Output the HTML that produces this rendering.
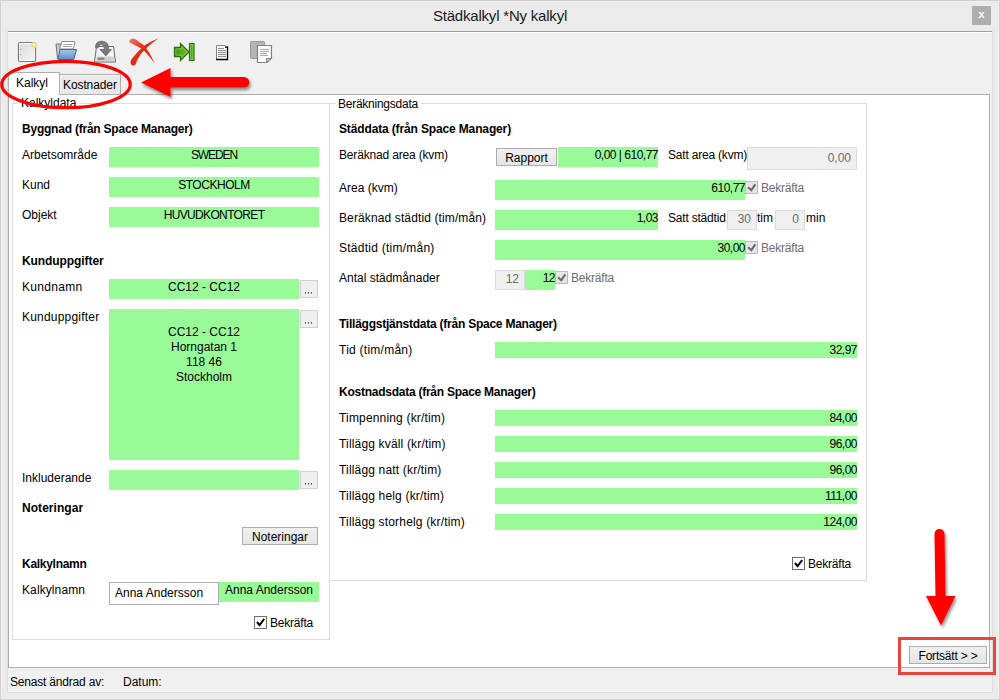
<!DOCTYPE html>
<html><head><meta charset="utf-8">
<style>
*{box-sizing:border-box}
html,body{margin:0;padding:0;width:1000px;height:700px;overflow:hidden;background:#ebebeb;font-family:"Liberation Sans",sans-serif;font-size:12px;color:#000}
.a{position:absolute}
.t{position:absolute;white-space:nowrap;line-height:15px;font-size:12px}
.b{font-weight:bold;letter-spacing:-0.2px}
.n{letter-spacing:-0.5px}
.g{position:absolute;background:#98fb98}
.gr{color:#6d6d6d}
.btn{position:absolute;border:1px solid #acacac;background:linear-gradient(#f0f0f0,#e5e5e5);text-align:center;line-height:15px}
.dis{position:absolute;border:1px solid #d9d9d9;background:#f0f0f0;color:#6d6d6d;text-align:right;line-height:15px}
.cb{position:absolute;width:13px;height:13px;border:1px solid #707070;background:#fff}
.cbd{position:absolute;width:13px;height:13px;border:1px solid #bcbcbc;background:#e6e6e6}
.dots{position:absolute;width:18px;height:18px;border:1px solid #d0d0d0;background:#efefef}
</style></head><body>
<!-- window frame -->
<div class="a" style="left:0;top:0;width:1000px;height:700px;border:1px solid #d0d0d0"></div>
<div class="a" style="left:1px;top:1px;width:998px;height:698px;border:1px solid #efefef"></div>
<!-- title -->
<div class="t" style="left:0;width:1000px;text-align:center;top:7px;font-size:15px;line-height:18px;letter-spacing:-0.2px;color:#1a1a1a">Städkalkyl *Ny kalkyl</div>
<div class="a" style="left:972px;top:6px;width:19px;height:19px;background:#adadad"></div>
<div class="t b" style="left:972px;top:7px;width:19px;text-align:center;color:#fff;font-size:11px">x</div>
<!-- client panel -->
<div class="a" style="left:7px;top:31px;width:986px;height:662px;background:#f0f0f0;border-left:1px solid #dcdcdc;border-right:1px solid #dcdcdc"></div>
<div class="a" style="left:8px;top:31px;width:984px;height:1px;background:#a0a0a0"></div>
<div class="a" style="left:8px;top:32px;width:984px;height:1px;background:#fff"></div>

<!-- tab page -->
<div class="a" style="left:8px;top:94px;width:982px;height:574px;background:#fff;border:1px solid #adadad"></div>
<!-- tabs -->
<div class="a" style="left:59px;top:74px;width:62px;height:21px;background:#e9e9e9;border:1px solid #adadad;box-shadow:inset 1px 1px 0 #f5f5f5"></div>
<div class="t" style="left:63px;top:78px;letter-spacing:-0.1px">Kostnader</div>
<div class="a" style="left:8px;top:72px;width:52px;height:23px;background:#fff;border:1px solid #adadad;border-bottom:none"></div>
<div class="t" style="left:16px;top:76px">Kalkyl</div>

<div class="a" style="left:12px;top:103px;width:318px;height:537px;border:1px solid #dcdcdc"></div>
<div class="a" style="left:329px;top:103px;width:538px;height:478px;border:1px solid #dcdcdc"></div>
<div class="t" style="left:18px;top:96px;background:#fff;padding:0 3px">Kalkyldata</div>
<div class="t" style="left:335px;top:97px;background:#fff;padding:0 3px;letter-spacing:-0.25px">Beräkningsdata</div>
<div class="t b" style="left:22px;top:122px;letter-spacing:-0.22px">Byggnad (från Space Manager)</div>
<div class="t " style="left:22px;top:148px;">Arbetsområde</div>
<div class="g" style="left:109px;top:147px;width:210px;height:20px"></div>
<div class="t" style="left:109px;width:210px;text-align:center;top:148px;letter-spacing:-1.1px">SWEDEN</div>
<div class="t " style="left:22px;top:178px;">Kund</div>
<div class="g" style="left:109px;top:177px;width:210px;height:20px"></div>
<div class="t" style="left:109px;width:210px;text-align:center;top:178px;letter-spacing:-0.45px">STOCKHOLM</div>
<div class="t " style="left:22px;top:208px;">Objekt</div>
<div class="g" style="left:109px;top:207px;width:210px;height:20px"></div>
<div class="t" style="left:109px;width:210px;text-align:center;top:208px;letter-spacing:-0.65px">HUVUDKONTORET</div>
<div class="t b" style="left:22px;top:254px;letter-spacing:-0.08px">Kunduppgifter</div>
<div class="t " style="left:22px;top:280px;letter-spacing:0.3px">Kundnamn</div>
<div class="g" style="left:109px;top:279px;width:190px;height:20px"></div>
<div class="t" style="left:109px;width:190px;text-align:center;top:280px;">CC12 - CC12</div>
<div class="dots" style="left:300px;top:280px"></div>
<div class="t " style="left:22px;top:310px;letter-spacing:0.2px">Kunduppgifter</div>
<div class="g" style="left:109px;top:309px;width:190px;height:151px"></div>
<div class="t" style="left:109px;width:190px;text-align:center;top:325px">CC12 - CC12<br>Horngatan 1<br>118 46<br>Stockholm</div>
<div class="dots" style="left:300px;top:310px"></div>
<div class="t " style="left:22px;top:471px;">Inkluderande</div>
<div class="g" style="left:109px;top:470px;width:190px;height:20px"></div>
<div class="dots" style="left:300px;top:471px"></div>
<div class="t b" style="left:22px;top:501px;letter-spacing:0.05px">Noteringar</div>
<div class="btn" style="left:242px;top:527px;width:76px;height:18px;padding-top:2px">Noteringar</div>
<div class="t b" style="left:22px;top:557px;letter-spacing:-0.28px">Kalkylnamn</div>
<div class="t " style="left:22px;top:583px;letter-spacing:0.1px">Kalkylnamn</div>
<div class="a" style="left:109px;top:582px;width:110px;height:23px;border:1px solid #abadb3;background:#fff"></div>
<div class="t " style="left:115px;top:586px;">Anna Andersson</div>
<div class="g" style="left:219px;top:582px;width:100px;height:20px"></div>
<div class="t" style="left:219px;width:100px;text-align:center;top:583px;">Anna Andersson</div>
<div class="cb" style="left:254px;top:616px"></div>
<div class="t " style="left:270px;top:616px;letter-spacing:-0.2px">Bekräfta</div>
<div class="t b" style="left:339px;top:122px;letter-spacing:-0.14px">Städdata (från Space Manager)</div>
<div class="t " style="left:339px;top:148px;letter-spacing:-0.17px">Beräknad area (kvm)</div>
<div class="btn" style="left:496px;top:148px;width:61px;height:18px;padding-top:2px">Rapport</div>
<div class="g" style="left:558px;top:147px;width:100px;height:20px"></div>
<div class="t" style="left:458px;width:200px;text-align:right;letter-spacing:-0.5px;top:148px;">0,00 | 610,77</div>
<div class="t " style="left:668px;top:148px;letter-spacing:-0.2px">Satt area (kvm)</div>
<div class="dis" style="left:747px;top:147px;width:110px;height:23px;padding:3px 5px 0 0">0,00</div>
<div class="t " style="left:339px;top:181px;">Area (kvm)</div>
<div class="g" style="left:495px;top:180px;width:250px;height:20px"></div>
<div class="t" style="left:395px;width:350px;text-align:right;letter-spacing:-0.5px;top:181px;">610,77</div>
<div class="cbd" style="left:745px;top:181px"></div>
<div class="t gr" style="left:761px;top:181px;letter-spacing:-0.2px">Bekräfta</div>
<div class="t " style="left:339px;top:211px;letter-spacing:0.12px">Beräknad städtid (tim/mån)</div>
<div class="g" style="left:495px;top:210px;width:163px;height:20px"></div>
<div class="t" style="left:395px;width:263px;text-align:right;letter-spacing:-0.5px;top:211px;">1,03</div>
<div class="t " style="left:668px;top:211px;letter-spacing:-0.2px">Satt städtid</div>
<div class="dis" style="left:727px;top:210px;width:30px;height:20px;padding:1px 5px 0 0">30</div>
<div class="t " style="left:757px;top:211px;">tim</div>
<div class="dis" style="left:775px;top:210px;width:30px;height:20px;padding:1px 5px 0 0">0</div>
<div class="t " style="left:806px;top:211px;">min</div>
<div class="t " style="left:339px;top:241px;letter-spacing:0.25px">Städtid (tim/mån)</div>
<div class="g" style="left:495px;top:240px;width:250px;height:20px"></div>
<div class="t" style="left:395px;width:350px;text-align:right;letter-spacing:-0.5px;top:241px;">30,00</div>
<div class="cbd" style="left:745px;top:241px"></div>
<div class="t gr" style="left:761px;top:241px;letter-spacing:-0.2px">Bekräfta</div>
<div class="t " style="left:339px;top:271px;">Antal städmånader</div>
<div class="dis" style="left:495px;top:270px;width:30px;height:20px;padding:1px 5px 0 0">12</div>
<div class="g" style="left:525px;top:270px;width:30px;height:20px"></div>
<div class="t" style="left:425px;width:130px;text-align:right;letter-spacing:-0.5px;top:271px;">12</div>
<div class="cbd" style="left:555px;top:271px"></div>
<div class="t gr" style="left:571px;top:271px;letter-spacing:-0.2px">Bekräfta</div>
<div class="t b" style="left:339px;top:317px;letter-spacing:-0.24px">Tilläggstjänstdata (från Space Manager)</div>
<div class="t " style="left:339px;top:343px;letter-spacing:0.25px">Tid (tim/mån)</div>
<div class="g" style="left:495px;top:342px;width:362px;height:16px"></div>
<div class="t" style="left:395px;width:462px;text-align:right;letter-spacing:-0.5px;top:343px;">32,97</div>
<div class="t b" style="left:339px;top:385px;letter-spacing:-0.25px">Kostnadsdata (från Space Manager)</div>
<div class="t " style="left:339px;top:411px;letter-spacing:0.17px">Timpenning (kr/tim)</div>
<div class="g" style="left:495px;top:410px;width:362px;height:16px"></div>
<div class="t" style="left:395px;width:462px;text-align:right;letter-spacing:-0.5px;top:411px;">84,00</div>
<div class="t " style="left:339px;top:437px;letter-spacing:0.17px">Tillägg kväll (kr/tim)</div>
<div class="g" style="left:495px;top:436px;width:362px;height:16px"></div>
<div class="t" style="left:395px;width:462px;text-align:right;letter-spacing:-0.5px;top:437px;">96,00</div>
<div class="t " style="left:339px;top:463px;letter-spacing:0.17px">Tillägg natt (kr/tim)</div>
<div class="g" style="left:495px;top:462px;width:362px;height:16px"></div>
<div class="t" style="left:395px;width:462px;text-align:right;letter-spacing:-0.5px;top:463px;">96,00</div>
<div class="t " style="left:339px;top:489px;letter-spacing:0.17px">Tillägg helg (kr/tim)</div>
<div class="g" style="left:495px;top:488px;width:362px;height:16px"></div>
<div class="t" style="left:395px;width:462px;text-align:right;letter-spacing:-0.5px;top:489px;">111,00</div>
<div class="t " style="left:339px;top:515px;letter-spacing:0.17px">Tillägg storhelg (kr/tim)</div>
<div class="g" style="left:495px;top:514px;width:362px;height:16px"></div>
<div class="t" style="left:395px;width:462px;text-align:right;letter-spacing:-0.5px;top:515px;">124,00</div>
<div class="cb" style="left:792px;top:557px"></div>
<div class="t " style="left:808px;top:557px;letter-spacing:-0.2px">Bekräfta</div>
<div class="btn" style="left:909px;top:646px;width:78px;height:18px;padding-top:2px;letter-spacing:-0.2px">Fortsätt &gt; &gt;</div>
<!-- status bar -->
<div class="a" style="left:7px;top:669px;width:986px;height:24px;border:1px solid #dcdcdc;border-top:none;background:#f0f0f0"></div>
<div class="t" style="left:10px;top:675px;letter-spacing:-0.19px">Senast ändrad av:</div>
<div class="t" style="left:123px;top:675px">Datum:</div>
<!-- overlay -->
<svg class="a" style="left:0;top:0" width="1000" height="700" viewBox="0 0 1000 700">
<defs>
<linearGradient id="gNew" x1="0" y1="0" x2="1" y2="1"><stop offset="0" stop-color="#dcdcdc"/><stop offset="1" stop-color="#f4f4f4"/></linearGradient>
<linearGradient id="gBlue" x1="0" y1="0" x2="0" y2="1"><stop offset="0" stop-color="#a8c6ea"/><stop offset="1" stop-color="#5b8fd0"/></linearGradient>
<linearGradient id="gGreen" x1="0" y1="0" x2="1" y2="0"><stop offset="0" stop-color="#3f9412"/><stop offset="1" stop-color="#6cc42a"/></linearGradient>
<linearGradient id="gRedX" x1="0" y1="0" x2="1" y2="1"><stop offset="0" stop-color="#f08070"/><stop offset="0.45" stop-color="#e02a10"/><stop offset="1" stop-color="#e83a20"/></linearGradient>
<filter id="sh" x="-20%" y="-20%" width="140%" height="160%"><feDropShadow dx="1.5" dy="2.5" stdDeviation="1.6" flood-color="#000" flood-opacity="0.45"/></filter>
</defs>
<!-- new doc -->
<rect x="18.5" y="42.5" width="17" height="19" rx="1.2" fill="#fff" stroke="#7a7a7a" stroke-width="1.2"/>
<rect x="20" y="44" width="14" height="16" fill="url(#gNew)"/>
<circle cx="20.5" cy="49.5" r="0.7" fill="#999"/><circle cx="20.5" cy="54.5" r="0.7" fill="#999"/>
<circle cx="34" cy="45" r="2.2" fill="#f6f6ff" stroke="#ece270" stroke-width="1.6"/>
<!-- open folder -->
<path d="M56 44 L61 44 L61 58.5 L57.5 58.5 Z" fill="#c8c8c8" stroke="#777" stroke-width="1"/>
<path d="M62 41.5 L74.5 41.5 L75 43 L73 49 L59.5 49 Z" fill="#fff" stroke="#8a8a8a" stroke-width="1"/>
<line x1="63.5" y1="44.5" x2="72.5" y2="44.5" stroke="#888" stroke-width="0.8"/>
<line x1="63" y1="46.5" x2="71.5" y2="46.5" stroke="#888" stroke-width="0.8"/>
<path d="M60 49.5 L76.5 49.5 L73.8 59.5 L58 59.5 Z" fill="url(#gBlue)" stroke="#3a68b0" stroke-width="1"/>
<!-- save -->
<path d="M96.5 46.5 L113.5 46.5 L115.5 62 L94.5 62 Z" fill="#f6f6f6" stroke="#686868" stroke-width="1"/>
<rect x="96.5" y="56.5" width="17.5" height="4.5" fill="#d4d4d4"/>
<rect x="97.5" y="57.5" width="7" height="2.5" fill="#8a8a8a"/>
<g stroke="#bdbdbd" stroke-width="0.6"><line x1="106.5" y1="57" x2="106.5" y2="60.5"/><line x1="108.5" y1="57" x2="108.5" y2="60.5"/><line x1="110.5" y1="57" x2="110.5" y2="60.5"/></g>
<path d="M95.5 47.8 Q95.3 41.2 101.5 41.2 Q108.5 41.2 108.5 48 L108.5 49.5 L111.5 49.5 L105.8 56 L100 49.5 L104.3 49.5 L104.3 48.2 Q104.3 44.6 101.2 44.6 Q98.6 44.6 98.2 47.8 Z" fill="#7a7a7a" stroke="#5c5c5c" stroke-width="0.7" stroke-linejoin="round"/>
<!-- red X -->
<path d="M129.5 40.5 Q131.5 37.5 135 39 L143.5 45 Q150 52 154.5 63.5 Q148 54 141.5 48.5 L130.5 43 Q128.5 42 129.5 40.5 Z" fill="url(#gRedX)"/>
<path d="M158.5 38.2 Q150 41.5 143.5 46 Q136 53 131 60 Q129.5 64.5 132.5 65.5 Q135.5 66 136.5 62 Q139 55 145.5 49 Q151 43.5 158.5 38.2 Z" fill="url(#gRedX)"/>
<!-- green arrow -->
<path d="M174.5 47.5 L180.5 47.5 L180.5 43.5 L189 52 L180.5 60.5 L180.5 56.5 L174.5 56.5 Z" fill="url(#gGreen)" stroke="#2a6e08" stroke-width="1.3" stroke-linejoin="miter"/>
<path d="M175.8 48.8 L181.8 48.8 L181.8 46.6 L187.2 52 L181.8 57.4 L181.8 55.2 L175.8 55.2 Z" fill="none" stroke="#a6dc7c" stroke-width="0.7" opacity="0.8"/>
<rect x="189.5" y="43.5" width="4.5" height="17" fill="#4aa818" stroke="#2a6e08" stroke-width="1.2"/>
<rect x="190.6" y="44.6" width="2.3" height="14.8" fill="none" stroke="#9ed870" stroke-width="0.7"/>
<!-- doc -->
<path d="M216.5 45.5 L225 45.5 L227.5 48 L227.5 59.5 L216.5 59.5 Z" fill="#fff" stroke="#808080" stroke-width="1"/>
<path d="M225 47.2 L227.5 47.2 L227.5 59.5 L216.2 59.5" fill="none" stroke="#000" stroke-width="1.3"/>
<g stroke="#777" stroke-width="0.9"><line x1="218" y1="48.4" x2="224" y2="48.4"/><line x1="218" y1="50.4" x2="226" y2="50.4"/><line x1="218" y1="52.4" x2="226" y2="52.4"/><line x1="218" y1="54.4" x2="226" y2="54.4"/><line x1="218" y1="56.4" x2="226" y2="56.4"/></g>
<!-- copy -->
<rect x="250.5" y="41.5" width="14" height="17" rx="0.8" fill="#b4b4b4" stroke="#999" stroke-width="1"/>
<path d="M257.5 45.5 L271.5 45.5 L271.5 58 L267 62.5 L257.5 62.5 Z" fill="#fff" stroke="#808080" stroke-width="1.2"/>
<path d="M266.5 62.5 L266.5 58.5 L271.5 58.5 Z" fill="#d0d0d0" stroke="#808080" stroke-width="1"/>
<g stroke="#999" stroke-width="0.9"><line x1="260" y1="49.4" x2="269" y2="49.4"/><line x1="260" y1="51.4" x2="269" y2="51.4"/><line x1="260" y1="53.4" x2="267" y2="53.4"/><line x1="260" y1="55.4" x2="268" y2="55.4"/></g>

<!-- checkmarks -->
<path d="M795 563 L797.6 566.2 L802.2 560" fill="none" stroke="#000" stroke-width="2"/>
<path d="M257 622 L259.6 625.2 L264.2 619" fill="none" stroke="#000" stroke-width="2"/>
<g fill="none" stroke="#6a6a6a" stroke-width="2.1"><path d="M748 187.2 L751.3 190.2 L755.3 184.3"/><path d="M748 247.2 L751.3 250.2 L755.3 244.3"/><path d="M558 277.2 L561.3 280.2 L565.3 274.3"/></g>
<!-- dots -->
<g fill="#444"><rect x="305" y="292" width="1" height="1.6"/><rect x="308" y="292" width="1" height="1.6"/><rect x="311" y="292" width="1" height="1.6"/><rect x="305" y="322" width="1" height="1.6"/><rect x="308" y="322" width="1" height="1.6"/><rect x="311" y="322" width="1" height="1.6"/><rect x="305" y="483" width="1" height="1.6"/><rect x="308" y="483" width="1" height="1.6"/><rect x="311" y="483" width="1" height="1.6"/></g>

<!-- annotations -->
<ellipse cx="66" cy="84.5" rx="64.2" ry="23.2" fill="none" stroke="#ff0000" stroke-width="3.2"/>
<g filter="url(#sh)">
<path d="M141 82.5 L170.5 68 L170.5 77 L244 77 A5 5 0 0 1 244 87.5 L170.5 87.5 L170.5 97 Z" fill="#ff0000"/>
</g>
<g filter="url(#sh)">
<path d="M934.5 534 A5 5 0 0 1 944.5 534 L945.5 596 L955.5 596 L941 625.5 L926 596 L935.5 596 Z" fill="#ff0000"/>
</g>
<rect x="899.5" y="638.5" width="95" height="35" fill="none" stroke="#e8453e" stroke-width="3"/>
</svg>

<!-- /overlay -->
</body></html>
